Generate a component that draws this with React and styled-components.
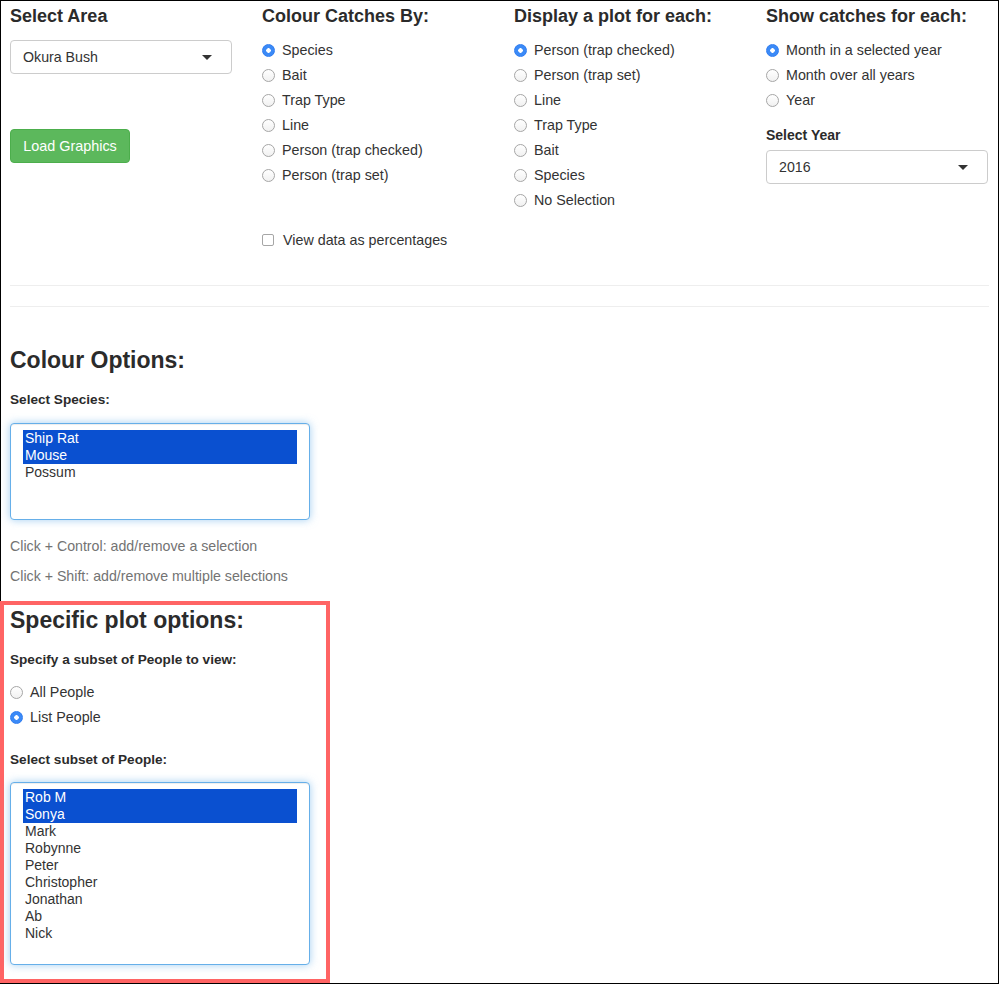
import React, { useState } from 'react';
import styled, { createGlobalStyle } from 'styled-components';

const GlobalStyle = createGlobalStyle`
  html, body {
    margin: 0;
    padding: 0;
    background: #fff;
  }
  body {
    font-family: "Liberation Sans", Arial, Helvetica, sans-serif;
    font-size: 14px;
    color: #333;
  }
  * {
    box-sizing: border-box;
  }
`;

const AREAS = ['Okura Bush'];
const COLOUR_BY = ['Species', 'Bait', 'Trap Type', 'Line', 'Person (trap checked)', 'Person (trap set)'];
const PLOT_FOR = ['Person (trap checked)', 'Person (trap set)', 'Line', 'Trap Type', 'Bait', 'Species', 'No Selection'];
const CATCHES_FOR = ['Month in a selected year', 'Month over all years', 'Year'];
const SPECIES = ['Ship Rat', 'Mouse', 'Possum'];
const PEOPLE = ['Rob M', 'Sonya', 'Mark', 'Robynne', 'Peter', 'Christopher', 'Jonathan', 'Ab', 'Nick'];

// radio list, one selected value
const RadioList = ({ name, options, value, onChange, top }) => (
    <RadioGroup $top={top}>
        {options.map(opt => (
            <OptionRow key={`${name}-${opt}`}>
                <Radio type="radio" name={name} checked={value === opt} onChange={() => onChange(opt)} />
                <span>{opt}</span>
            </OptionRow>
        ))}
    </RadioGroup>
);

// fake "select multiple" so the highlight looks the same focused or not
const MultiList = ({ items, selected, onToggle, height }) => (
    <ListBox $height={height} role="listbox" aria-multiselectable="true">
        {items.map(item => (
            <ListItem key={item} $selected={selected.includes(item)} onClick={() => onToggle(item)}>
                {item}
            </ListItem>
        ))}
    </ListBox>
);

const Dropdown = ({ value, top }) => (
    <SelectBox $top={top}>
        <span>{value}</span>
        <Caret />
    </SelectBox>
);

export default function App() {
    const [colourBy, setColourBy] = useState('Species');
    const [plotFor, setPlotFor] = useState('Person (trap checked)');
    const [catchesFor, setCatchesFor] = useState('Month in a selected year');
    const [percent, setPercent] = useState(false);
    const [peopleMode, setPeopleMode] = useState('List People');
    const [species, setSpecies] = useState(['Ship Rat', 'Mouse']);
    const [people, setPeople] = useState(['Rob M', 'Sonya']);

    const toggle = (list, setList) => (item) => {
        setList(list.includes(item) ? list.filter(i => i !== item) : [...list, item]);
    };

    return (
        <Frame>
            <GlobalStyle />
            <TopGrid>
                <Column>
                    <ColumnTitle>Select Area</ColumnTitle>
                    <Dropdown value={AREAS[0]} top={14} />
                    <LoadButton type="button">Load Graphics</LoadButton>
                </Column>
                <Column>
                    <ColumnTitle>Colour Catches By:</ColumnTitle>
                    <RadioList name="colour" options={COLOUR_BY} value={colourBy} onChange={setColourBy} top={14} />
                    <CheckRow>
                        <Checkbox type="checkbox" checked={percent} onChange={() => setPercent(!percent)} />
                        <span>View data as percentages</span>
                    </CheckRow>
                </Column>
                <Column>
                    <ColumnTitle>Display a plot for each:</ColumnTitle>
                    <RadioList name="plot" options={PLOT_FOR} value={plotFor} onChange={setPlotFor} top={14} />
                </Column>
                <Column>
                    <ColumnTitle>Show catches for each:</ColumnTitle>
                    <RadioList name="catches" options={CATCHES_FOR} value={catchesFor} onChange={setCatchesFor} top={14} />
                    <FieldLabel $size={14} $top={15}>Select Year</FieldLabel>
                    <Dropdown value="2016" top={5} />
                </Column>
            </TopGrid>

            <Rule $top={35} />
            <Rule $top={20} />

            <SectionTitle $top={40}>Colour Options:</SectionTitle>
            <FieldLabel $top={17}>Select Species:</FieldLabel>
            <ListSpacer>
                <MultiList items={SPECIES} selected={species} onToggle={toggle(species, setSpecies)} height={97} />
            </ListSpacer>
            <HelpText $top={16}>Click + Control: add/remove a selection</HelpText>
            <HelpText $top={10}>Click + Shift: add/remove multiple selections</HelpText>

            <Highlighted>
                <SectionTitle $top={0}>Specific plot options:</SectionTitle>
                <FieldLabel $top={17}>Specify a subset of People to view:</FieldLabel>
                <RadioList name="people" options={['All People', 'List People']} value={peopleMode} onChange={setPeopleMode} top={12} />
                <FieldLabel $top={23}>Select subset of People:</FieldLabel>
                <ListSpacer>
                    <MultiList items={PEOPLE} selected={people} onToggle={toggle(people, setPeople)} height={183} />
                </ListSpacer>
            </Highlighted>
        </Frame>
    );
}

const Frame = styled.div`
    width: 999px;
    height: 984px;
    border: 1px solid #000;
    padding: 5px 9px 0;
    overflow: visible;
`;

const TopGrid = styled.div`
    display: grid;
    grid-template-columns: repeat(4, 222px);
    column-gap: 30px;
    align-items: start;
`;

const Column = styled.div`
    display: flex;
    flex-direction: column;
`;

const ColumnTitle = styled.h4`
    margin: 0;
    font-size: 18px;
    line-height: 20px;
    font-weight: bold;
    color: #2b2b2b;
`;

const SelectBox = styled.div`
    margin-top: ${props => props.$top}px;
    height: 34px;
    width: 222px;
    border: 1px solid #ccc;
    border-radius: 4px;
    padding: 0 19px 0 12px;
    display: flex;
    align-items: center;
    justify-content: space-between;
    font-size: 14.2px;
    color: #333;
    background: #fff;
`;

const Caret = styled.span`
    width: 0;
    height: 0;
    border-left: 5px solid transparent;
    border-right: 5px solid transparent;
    border-top: 5px solid #333;
`;

const LoadButton = styled.button`
    margin-top: 55px;
    align-self: flex-start;
    height: 34px;
    width: 120px;
    padding: 0;
    background: #5cb85c;
    border: 1px solid #4cae4c;
    border-radius: 4px;
    color: #fff;
    font-family: inherit;
    font-size: 14.4px;
    cursor: pointer;
`;

const RadioGroup = styled.div`
    margin-top: ${props => props.$top}px;
    display: flex;
    flex-direction: column;
    gap: 5px;
`;

const OptionRow = styled.label`
    display: flex;
    align-items: center;
    gap: 7px;
    height: 20px;
    font-size: 14.3px;
    color: #333;
    cursor: pointer;
`;

const Radio = styled.input`
    appearance: none;
    margin: 0;
    width: 13px;
    height: 13px;
    border-radius: 50%;
    border: 1px solid #a6a6a6;
    background: linear-gradient(#fff, #f1f1f1);
    flex: none;

    &:checked {
        border-color: #2f7cf0;
        background: radial-gradient(circle, #fff 0 2px, #3b8af7 2.5px);
    }
`;

const CheckRow = styled.label`
    margin-top: 45px;
    display: flex;
    align-items: center;
    gap: 9px;
    height: 20px;
    font-size: 14.3px;
    color: #333;
`;

const Checkbox = styled.input`
    appearance: none;
    margin: 0;
    width: 12px;
    height: 12px;
    border: 1px solid #a6a6a6;
    border-radius: 2px;
    background: #fff;
    flex: none;

    &:checked {
        background: #3b8af7;
        border-color: #2f7cf0;
    }
`;

const FieldLabel = styled.div`
    margin-top: ${props => props.$top}px;
    font-size: ${props => props.$size || 13.6}px;
    line-height: 20px;
    font-weight: bold;
    color: #2b2b2b;
`;

const Rule = styled.hr`
    margin: ${props => props.$top}px 0 0;
    border: 0;
    border-top: 1px solid #eee;
    height: 0;
`;

const SectionTitle = styled.h3`
    margin: ${props => props.$top}px 0 0;
    font-size: 23px;
    line-height: 26px;
    font-weight: bold;
    color: #2b2b2b;
`;

const ListSpacer = styled.div`
    margin-top: 13px;
`;

const ListBox = styled.div`
    width: 300px;
    height: ${props => props.$height}px;
    border: 1px solid #66afe9;
    border-radius: 4px;
    box-shadow: inset 0 1px 1px rgba(0, 0, 0, 0.075), 0 0 8px rgba(102, 175, 233, 0.6);
    padding: 6px 12px;
    overflow: hidden;
    background: #fff;
`;

const ListItem = styled.div`
    height: 17px;
    line-height: 17px;
    padding-left: 2px;
    font-size: 14px;
    background: ${props => props.$selected ? '#0a50d0' : 'transparent'};
    color: ${props => props.$selected ? '#fff' : '#333'};
    cursor: default;
`;

const HelpText = styled.div`
    margin-top: ${props => props.$top}px;
    line-height: 20px;
    font-size: 14.2px;
    color: #737373;
`;

const Highlighted = styled.section`
    margin: 15px 0 0 -10px;
    width: 330px;
    border: 4px solid #ff6464;
    padding: 2px 6px 14px;

    ${ListSpacer} {
        margin-top: 12px;
    }
`;
